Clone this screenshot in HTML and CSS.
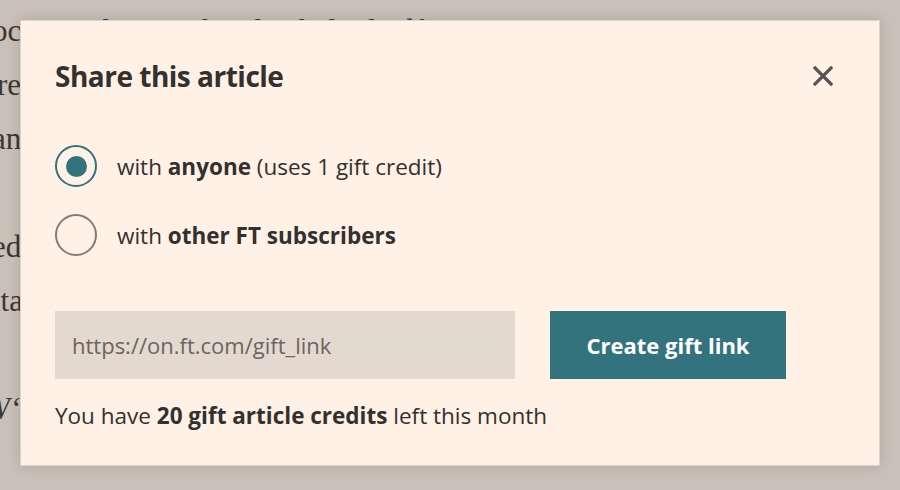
FILE: index.html
```html
<!DOCTYPE html>
<html lang="en">
<head>
    <meta charset="UTF-8">
    <meta name="viewport" content="width=device-width, initial-scale=1.0">
    <title>Share this article</title>
    <link rel="stylesheet" href="styles.css">
</head>
<body>

    <div class="article">
        <p class="line">oc room lower a hen lus la lonla df nor sure more</p>
        <p class="line shift">re that were kept in the market for the year</p>
        <p class="line">an the long way to the city and back again</p>
        <p class="line gap">ed in the spring after the last of the rains</p>
        <p class="line">ita little more than the rest of them had</p>
        <p class="line gap italic cut">W‘ the answer came later</p>
    </div>

    <div class="dialog">
        <div class="dialog-header">
            <h2>Share this article</h2>
            <button class="close" aria-label="Close">
                <svg width="22" height="22" viewBox="0 0 22 22">
                    <path d="M3 3 L19 19 M19 3 L3 19" stroke="#575452" stroke-width="3.2" stroke-linecap="square"/>
                </svg>
            </button>
        </div>

        <div class="options">
            <label class="option">
                <input type="radio" name="share" checked>
                <span>with <b>anyone</b> (uses 1 gift credit)</span>
            </label>
            <label class="option">
                <input type="radio" name="share">
                <span>with <b>other FT subscribers</b></span>
            </label>
        </div>

        <div class="link-row">
            <input type="text" class="link-input" placeholder="https://on.ft.com/gift_link">
            <button class="create">Create gift link</button>
        </div>

        <p class="credits">You have <b>20 gift article credits</b> left this month</p>
    </div>

</body>
</html>
```

FILE: styles.css
```css
body {
    margin: 0;
    background-color: #c9c0b7;
    overflow: hidden;
    height: 490px;
    position: relative;
}
.article {
    font-family: "Liberation Serif", "DejaVu Serif", serif;
    font-size: 31px;
    color: #3b3734;
    padding-top: 4px;
    margin-left: -8px;
}
.line {
    margin: 0;
    line-height: 54px;
    white-space: nowrap;
}
.line.gap {
    margin-top: 54px;
}
.shift {
    text-indent: 5px;
}
.italic {
    font-style: italic;
}
.cut {
    text-indent: -8px;
}
.dialog {
    position: absolute;
    top: 20px;
    left: 20px;
    width: 860px;
    height: 446px;
    background-color: #fff1e5;
    border: 1px solid #dcd3ca;
    box-shadow: 0 0 12px rgba(0, 0, 0, 0.14);
    padding: 0 45px 0 34px;
    box-sizing: border-box;
    font-family: "Open Sans", "Noto Sans", sans-serif;
    color: #33302e;
}
.dialog-header {
    display: flex;
    justify-content: space-between;
    align-items: center;
    padding-top: 36px;
}
.dialog-header h2 {
    margin: 0;
    font-size: 28px;
    font-weight: 700;
    line-height: 38px;
    letter-spacing: -0.5px;
}
.close {
    background: none;
    border: none;
    padding: 0;
    width: 22px;
    height: 22px;
    cursor: pointer;
}
.options {
    margin-top: 50px;
    display: flex;
    flex-direction: column;
    gap: 27px;
}
.option {
    display: flex;
    align-items: center;
    gap: 20px;
    font-size: 22.5px;
    cursor: pointer;
}
.option b {
    font-weight: 700;
}
.option input {
    appearance: none;
    -webkit-appearance: none;
    margin: 0;
    width: 42px;
    height: 42px;
    border: 2px solid #857b75;
    border-radius: 50%;
    box-sizing: border-box;
    background-color: #fff1e5;
    display: grid;
    place-items: center;
}
.option input:checked {
    border-color: #33737e;
}
.option input:checked::after {
    content: "";
    width: 21px;
    height: 21px;
    border-radius: 50%;
    background-color: #33737e;
}
.link-row {
    display: flex;
    gap: 35px;
    margin-top: 55px;
}
.link-input {
    width: 460px;
    height: 68px;
    box-sizing: border-box;
    border: none;
    background-color: #e4d9cf;
    padding: 0 17px;
    font-family: inherit;
    font-size: 22px;
    color: #33302e;
}
.link-input::placeholder {
    color: #6b6560;
}
.create {
    width: 236px;
    height: 68px;
    border: none;
    background-color: #33737e;
    color: white;
    font-family: inherit;
    font-size: 22px;
    font-weight: 700;
    cursor: pointer;
}
.credits {
    margin: 21px 0 0;
    font-size: 22.5px;
}
```
